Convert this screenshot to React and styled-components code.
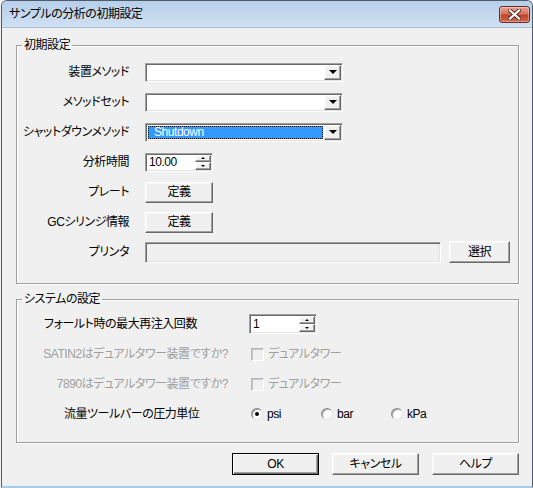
import styled, { createGlobalStyle, css } from "styled-components";

const Global = createGlobalStyle`
  html, body {
    margin: 0;
    padding: 0;
    background: #f0f0f0;
    overflow: hidden;
  }
  body {
    font-family: "Liberation Sans", "Noto Sans CJK JP", sans-serif;
    font-size: 12px;
    letter-spacing: -0.45px;
    font-feature-settings: "palt";
    color: #000;
  }
`;

const raised = css`
  border: 1px solid;
  border-color: #fff #696969 #696969 #fff;
  box-shadow: inset -1px -1px #a0a0a0, inset 1px 1px #f8f8f8;
  background: #f0f0f0;
`;

const sunken = css`
  border: 1px solid;
  border-color: #a0a0a0 #fff #fff #a0a0a0;
  box-shadow: inset 1px 1px #696969, inset -1px -1px #e3e3e3;
`;

const Window = styled.div`
  margin-left: 1px;
  width: 532px;
  height: 488px;
  box-sizing: border-box;
  border: 1px solid #4e5d6e;
  border-bottom: 2px solid #a6cbe8;
  border-radius: 6px 6px 0 0;
  display: flex;
  flex-direction: column;
  overflow: hidden;
`;

const TitleBar = styled.div`
  height: 26px;
  flex: none;
  display: flex;
  align-items: flex-start;
  justify-content: space-between;
  background: linear-gradient(#b7cfe9, #c4d8ee 55%, #d0e1f3);
  border-bottom: 1px solid #a9bfd6;
`;

const Title = styled.div`
  padding-left: 7px;
  line-height: 26px;
  font-size: 12px;
`;

const CloseButton = styled.div`
  width: 31px;
  height: 17px;
  margin: 5px 2px 0 0;
  box-sizing: border-box;
  border: 1px solid #6e2a20;
  border-radius: 3px;
  background: linear-gradient(#e9a595, #d5735c 45%, #c2432a 55%, #cf6a50);
  box-shadow: inset 0 0 0 1px rgba(255, 255, 255, 0.35);
  display: flex;
  align-items: center;
  justify-content: center;
`;

const Client = styled.div`
  flex: 1;
  background: #f0f0f0;
  padding: 0 13px 0 14px;
  display: flex;
  flex-direction: column;
`;

const Group = styled.fieldset`
  margin: ${(p) => p.$top}px 0 0 0;
  padding: ${(p) => p.$padTop}px 0 ${(p) => p.$padBottom}px 0;
  border: 1px solid #a0a0a0;
  box-shadow: inset 1px 1px #fff, 1px 1px #fff;
  min-width: 0;
`;

const Legend = styled.legend`
  margin-left: 5px;
  padding: 0 2px;
  line-height: 14px;
  font-size: 12px;
`;

const Row = styled.div`
  height: 30px;
  display: flex;
  align-items: center;
`;

const Label = styled.div`
  width: ${(p) => p.$w}px;
  margin-right: ${(p) => p.$gap}px;
  padding-left: ${(p) => p.$pad || 0}px;
  box-sizing: border-box;
  text-align: ${(p) => p.$align || "right"};
  white-space: nowrap;
  line-height: 14px;
  color: ${(p) => (p.$disabled ? "#a0a0a0" : "#000")};
`;

const Combo = styled.div`
  width: ${(p) => p.$w}px;
  height: 19px;
  box-sizing: border-box;
  padding: 1px;
  display: flex;
  background: #fff;
  ${sunken}
`;

const ComboText = styled.div`
  flex: 1;
  margin: 1px;
  padding-left: 6px;
  line-height: 13px;
  ${(p) =>
    p.$selected &&
    css`
      background: #3399ff;
      color: #fff;
      outline: 1px dotted #000;
      outline-offset: -1px;
    `}
`;

const DropButton = styled.div`
  width: 17px;
  box-sizing: border-box;
  display: flex;
  align-items: center;
  justify-content: center;
  ${raised}
`;

const Arrow = styled.div`
  width: 0;
  height: 0;
  border-left: ${(p) => p.$s}px solid transparent;
  border-right: ${(p) => p.$s}px solid transparent;
  ${(p) =>
    p.$up
      ? css`border-bottom: ${p.$s}px solid #000;`
      : css`border-top: ${p.$s}px solid #000;`}
`;

const Spin = styled.div`
  width: ${(p) => p.$w}px;
  height: ${(p) => p.$h}px;
  box-sizing: border-box;
  padding: 1px;
  display: flex;
  background: #fff;
  ${sunken}
`;

const SpinText = styled.div`
  flex: 1;
  padding-left: 2px;
  display: flex;
  align-items: center;
`;

const SpinButtons = styled.div`
  width: 16px;
  display: flex;
  flex-direction: column;
`;

const SpinButton = styled.div`
  flex: 1;
  box-sizing: border-box;
  display: flex;
  align-items: center;
  justify-content: center;
  ${raised}
`;

const PushButton = styled.div`
  width: ${(p) => p.$w}px;
  height: ${(p) => p.$h}px;
  margin-left: ${(p) => p.$ml || 0}px;
  box-sizing: border-box;
  display: flex;
  align-items: center;
  justify-content: center;
  line-height: 14px;
  ${raised}
  ${(p) =>
    p.$default &&
    css`
      border: 1px solid #000;
      box-shadow: inset 1px 1px #fff, inset -1px -1px #696969,
        inset -2px -2px #a0a0a0;
    `}
`;

const TextField = styled.div`
  width: ${(p) => p.$w}px;
  height: 21px;
  box-sizing: border-box;
  background: #f0f0f0;
  ${sunken}
`;

const Check = styled.div`
  display: flex;
  align-items: center;
  margin-left: 2px;
  color: #a0a0a0;
  line-height: 14px;
`;

const CheckBox = styled.div`
  width: 13px;
  height: 13px;
  box-sizing: border-box;
  margin-right: 4px;
  border: 1px solid;
  border-color: #b5b5b5 #fff #fff #b5b5b5;
  box-shadow: inset 1px 1px #c8c8c8;
  background: #f0f0f0;
`;

const Radios = styled.div`
  display: flex;
  margin-left: 2px;
`;

const RadioItem = styled.div`
  width: 70px;
  display: flex;
  align-items: center;
  line-height: 14px;
`;

const RadioCircle = styled.div`
  width: 12px;
  height: 12px;
  box-sizing: border-box;
  margin-right: 4px;
  border-radius: 50%;
  background: #fff;
  border: 1px solid;
  border-color: #8a8a8a #e3e3e3 #e3e3e3 #8a8a8a;
  box-shadow: inset 1px 1px #a0a0a0;
  display: flex;
  align-items: center;
  justify-content: center;
  &::after {
    content: "";
    width: 4px;
    height: 4px;
    border-radius: 50%;
    background: ${(p) => (p.$on ? "#000" : "transparent")};
  }
`;

const Footer = styled.div`
  margin-top: 10px;
  display: flex;
  justify-content: flex-end;
  gap: 13px;
`;

const CloseIcon = () => (
  <svg width="13" height="11" viewBox="0 0 13 11">
    <path d="M2 1.5 L11 9.5 M11 1.5 L2 9.5" stroke="#5a2a24" strokeWidth="4" strokeLinecap="square" />
    <path d="M2 1.5 L11 9.5 M11 1.5 L2 9.5" stroke="#fff" strokeWidth="2.2" strokeLinecap="square" />
  </svg>
);

const ComboBox = ({ value, selected }) => (
  <Combo $w={198}>
    <ComboText $selected={selected}>{value}</ComboText>
    <DropButton>
      <Arrow $s={4} />
    </DropButton>
  </Combo>
);

const SpinBox = ({ value, w, h }) => (
  <Spin $w={w} $h={h}>
    <SpinText>{value}</SpinText>
    <SpinButtons>
      <SpinButton>
        <Arrow $s={2} $up />
      </SpinButton>
      <SpinButton>
        <Arrow $s={2} />
      </SpinButton>
    </SpinButtons>
  </Spin>
);

const units = ["psi", "bar", "kPa"];

const App = () => {
  return (
    <>
      <Global />
      <Window>
        <TitleBar>
          <Title>サンプルの分析の初期設定</Title>
          <CloseButton>
            <CloseIcon />
          </CloseButton>
        </TitleBar>
        <Client>
          <Group $top={10} $padTop={5} $padBottom={16}>
            <Legend>初期設定</Legend>
            <Row>
              <Label $w={112} $gap={16}>装置メソッド</Label>
              <ComboBox value="" />
            </Row>
            <Row>
              <Label $w={112} $gap={16}>メソッドセット</Label>
              <ComboBox value="" />
            </Row>
            <Row>
              <Label $w={112} $gap={16}>シャットダウンメソッド</Label>
              <ComboBox value="Shutdown" selected />
            </Row>
            <Row>
              <Label $w={112} $gap={16}>分析時間</Label>
              <SpinBox value="10.00" w={68} h={19} />
            </Row>
            <Row>
              <Label $w={112} $gap={16}>プレート</Label>
              <PushButton $w={68} $h={21}>定義</PushButton>
            </Row>
            <Row>
              <Label $w={112} $gap={16}>GCシリンジ情報</Label>
              <PushButton $w={68} $h={21}>定義</PushButton>
            </Row>
            <Row>
              <Label $w={112} $gap={16}>プリンタ</Label>
              <TextField $w={296} />
              <PushButton $w={61} $h={22} $ml={8}>選択</PushButton>
            </Row>
          </Group>

          <Group $top={8} $padTop={3} $padBottom={13}>
            <Legend>システムの設定</Legend>
            <Row>
              <Label $w={211} $gap={21} $align="left" $pad={27}>
                フォールト時の最大再注入回数
              </Label>
              <SpinBox value="1" w={68} h={20} />
            </Row>
            <Row>
              <Label $w={211} $gap={21} $disabled>
                SATIN2はデュアルタワー装置ですか?
              </Label>
              <Check>
                <CheckBox />
                デュアルタワー
              </Check>
            </Row>
            <Row>
              <Label $w={211} $gap={21} $disabled>
                7890はデュアルタワー装置ですか?
              </Label>
              <Check>
                <CheckBox />
                デュアルタワー
              </Check>
            </Row>
            <Row>
              <Label $w={211} $gap={21} $align="left" $pad={47}>
                流量ツールバーの圧力単位
              </Label>
              <Radios>
                {units.map((u, i) => (
                  <RadioItem key={u}>
                    <RadioCircle $on={i === 0} />
                    {u}
                  </RadioItem>
                ))}
              </Radios>
            </Row>
          </Group>

          <Footer>
            <PushButton $w={87} $h={22} $default>OK</PushButton>
            <PushButton $w={87} $h={22}>キャンセル</PushButton>
            <PushButton $w={87} $h={22}>ヘルプ</PushButton>
          </Footer>
        </Client>
      </Window>
    </>
  );
};

export default App;
